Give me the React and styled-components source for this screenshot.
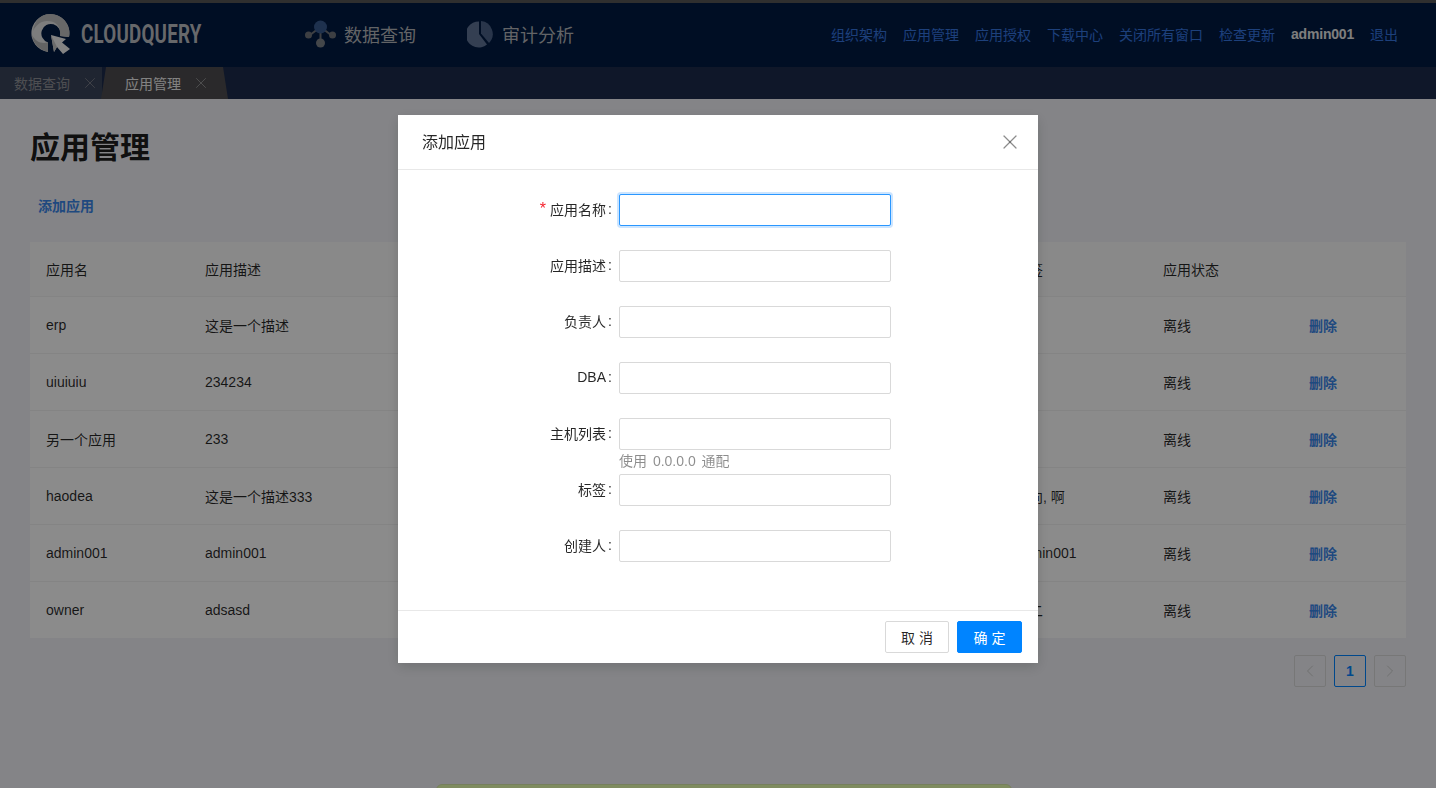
import React from 'react';
import styled, { createGlobalStyle } from 'styled-components';
import { X, ChevronLeft, ChevronRight } from 'lucide-react';

const FONT = `"Liberation Sans", "Noto Sans CJK SC", sans-serif`;

const navLinks = ['组织架构', '应用管理', '应用授权', '下载中心', '关闭所有窗口', '检查更新'];

const rows = [
  { name: 'erp', desc: '这是一个描述', tag: '' },
  { name: 'uiuiuiu', desc: '234234', tag: '' },
  { name: '另一个应用', desc: '233', tag: '' },
  { name: 'haodea', desc: '这是一个描述333', tag: '方向, 啊' },
  { name: 'admin001', desc: 'admin001', tag: 'admin001' },
  { name: 'owner', desc: 'adsasd', tag: '一二' },
];

const fields = [
  { label: '应用名称', required: true, focused: true },
  { label: '应用描述' },
  { label: '负责人' },
  { label: 'DBA' },
  { label: '主机列表', hint: '使用 0.0.0.0 通配' },
  { label: '标签' },
  { label: '创建人' },
];

function Logo() {
  return (
    <svg width="40" height="40" viewBox="0 0 40 40">
      <g transform="translate(0 1)">
        <path d="M18 37A19 19 0 1 1 39 22L30 21A9.500 9.500 0 1 0 18 27.500Z" fill="#e4e4e4" />
        <path d="M20 -1A19 19 0 0 1 39 22L30 21C31 11 26 6 17 6C11 6 6 10 3 16C4 6 11 -1 20 -1Z" fill="#bdbdbd" />
        <path d="M18 37C10 35 3 29 2 20C6 27 11 29 18 27.500Z" fill="#b5b5b5" />
        <path d="M21 20L36 24L32 27.500L40 34L33 39L27 32L24 37Z" fill="#efefef" />
        <path d="M21 20L27 32L24 37Z" fill="#c4c4c4" />
      </g>
    </svg>
  );
}

function QueryIcon() {
  return (
    <svg width="31" height="28" viewBox="0 0 31 28">
      <path d="M15.500 7L5 15M15.500 7L26 15M15.500 7L15.500 23" stroke="#6f737a" strokeWidth="2" fill="none" />
      <circle cx="15.500" cy="7" r="6.500" fill="#37598f" />
      <circle cx="3.500" cy="15" r="3.500" fill="#70747a" />
      <circle cx="27.500" cy="15" r="3.500" fill="#70747a" />
      <circle cx="15.500" cy="23" r="4.500" fill="#7d8188" />
    </svg>
  );
}

function AuditIcon() {
  return (
    <svg width="27" height="28" viewBox="0 0 27 28">
      <path d="M12 1.500V14L20 24.500A13 13 0 1 1 12 1.500Z" fill="#5f7396" />
      <path d="M14 1A13 13 0 0 1 22 23L14 13.500Z" fill="#4b6288" />
    </svg>
  );
}

export default function App() {
  return (
    <>
      <GlobalStyle />
      <Page>
        <TopStrip />
        <Header>
          <Brand>
            <Logo />
            <BrandName>CLOUDQUERY</BrandName>
          </Brand>
          <MainNav>
            <MainNavItem><QueryIcon />数据查询</MainNavItem>
            <MainNavItem><AuditIcon />审计分析</MainNavItem>
          </MainNav>
          <UserNav>
            {navLinks.map((link) => <NavLink key={link}>{link}</NavLink>)}
            <UserName>admin001</UserName>
            <NavLink>退出</NavLink>
          </UserNav>
        </Header>
        <TabBar>
          <Tab>数据查询<X size={18} strokeWidth={1.100} /></Tab>
          <Tab $active>应用管理<X size={18} strokeWidth={1.100} /></Tab>
        </TabBar>
        <Content>
          <Title>应用管理</Title>
          <AddLink>添加应用</AddLink>
          <Table>
            <colgroup>
              <col style={{ width: 159 }} />
              <col style={{ width: 810 }} />
              <col style={{ width: 148 }} />
              <col style={{ width: 146 }} />
              <col />
            </colgroup>
            <thead>
              <tr>
                <th>应用名</th>
                <th>应用描述</th>
                <th>标签</th>
                <th>应用状态</th>
                <th />
              </tr>
            </thead>
            <tbody>
              {rows.map((row) => (
                <tr key={row.name}>
                  <td>{row.name}</td>
                  <td>{row.desc}</td>
                  <td>{row.tag}</td>
                  <td>离线</td>
                  <td><DeleteLink>删除</DeleteLink></td>
                </tr>
              ))}
            </tbody>
          </Table>
          <Pagination>
            <PageButton $muted><ChevronLeft size={20} strokeWidth={1} /></PageButton>
            <PageButton $current>1</PageButton>
            <PageButton $muted><ChevronRight size={20} strokeWidth={1} /></PageButton>
          </Pagination>
        </Content>
        <Notice />
      </Page>
      <Mask>
        <Modal>
          <ModalHeader>
            添加应用
            <CloseButton><X size={24} strokeWidth={1.200} /></CloseButton>
          </ModalHeader>
          <ModalBody>
            {fields.map((field) => (
              <FormRow key={field.label}>
                <Label>
                  {field.required && <Star>*</Star>}
                  {field.label}
                  <Colon>:</Colon>
                </Label>
                <Control>
                  <Input $focused={field.focused} />
                  {field.hint && <Hint>{field.hint}</Hint>}
                </Control>
              </FormRow>
            ))}
          </ModalBody>
          <ModalFooter>
            <Button>取 消</Button>
            <Button $primary>确 定</Button>
          </ModalFooter>
        </Modal>
      </Mask>
    </>
  );
}

const GlobalStyle = createGlobalStyle`
  html, body {
    margin: 0;
    height: 100%;
    overflow: hidden;
  }
  body {
    font-family: ${FONT};
    font-size: 14px;
    color: rgba(0, 0, 0, 0.85);
    background: #f0f1f6;
  }
`;

const Page = styled.div`
  height: 788px;
  position: relative;
  overflow: hidden;
`;

const TopStrip = styled.div`
  height: 3px;
  background: #565656;
`;

const Header = styled.header`
  height: 64px;
  display: flex;
  align-items: center;
  background: #001a42;
  padding: 0 38px 2px 30px;
  box-sizing: border-box;
`;

const Brand = styled.div`
  width: 275px;
  display: flex;
  align-items: center;
  gap: 11px;
`;

const BrandName = styled.span`
  font-family: "Liberation Sans Narrow", "Roboto", sans-serif;
  font-size: 25px;
  font-weight: 700;
  color: #bcbdc2;
  letter-spacing: 0.3px;
  transform: scaleX(0.75);
  transform-origin: left center;
`;

const MainNav = styled.nav`
  display: flex;
  align-items: center;
  gap: 51px;
`;

const MainNavItem = styled.a`
  display: flex;
  align-items: center;
  gap: 8px;
  font-size: 18px;
  color: #b4b6ba;
`;

const UserNav = styled.nav`
  margin-left: auto;
  display: flex;
  align-items: center;
  gap: 16px;
  font-size: 14px;
`;

const NavLink = styled.a`
  color: #3675e0;
`;

const UserName = styled.span`
  color: #e6e6e6;
  font-weight: 700;
  letter-spacing: -0.2px;
`;

const TabBar = styled.div`
  height: 32px;
  display: flex;
  background: #1c2a4c;
`;

const Tab = styled.div`
  width: ${(p) => (p.$active ? '127px' : '102px')};
  margin-left: ${(p) => (p.$active ? '-1px' : '0')};
  padding-left: ${(p) => (p.$active ? '24px' : '14px')};
  box-sizing: border-box;
  display: flex;
  align-items: center;
  gap: 11px;
  font-size: 14px;
  color: ${(p) => (p.$active ? '#ededed' : '#8e9096')};
  background: ${(p) => (p.$active ? '#4d4c4f' : '#39445a')};
  clip-path: ${(p) => (p.$active ? 'polygon(5px 0, 122px 0, 100% 100%, 0 100%)' : 'none')};
  & > svg {
    color: ${(p) => (p.$active ? '#9a9a9c' : '#80828a')};
  }
`;

const Content = styled.main`
  padding: 33px 30px 0;
`;

const Title = styled.h1`
  margin: 0;
  font-size: 30px;
  line-height: 32px;
  font-weight: 700;
  color: rgba(0, 0, 0, 0.9);
`;

const AddLink = styled.a`
  display: block;
  margin: 31px 0 0 8px;
  line-height: 22px;
  font-weight: 700;
  color: #3a85e8;
`;

const Table = styled.table`
  width: 100%;
  margin-top: 25px;
  table-layout: fixed;
  border-collapse: collapse;
  background: #fefefe;

  th, td {
    padding: 0 16px;
    text-align: left;
    font-weight: 400;
    border-bottom: 1px solid #f0f0f0;
    white-space: nowrap;
  }
  th {
    height: 54px;
    background: #fafafa;
  }
  td {
    height: 56px;
  }
  tbody tr:last-child td {
    border-bottom: 0;
  }
`;

const DeleteLink = styled.a`
  font-weight: 700;
  color: #3a85e8;
`;

const Pagination = styled.div`
  display: flex;
  justify-content: flex-end;
  gap: 8px;
  margin-top: 17px;
`;

const PageButton = styled.div`
  width: 30px;
  height: 30px;
  display: flex;
  align-items: center;
  justify-content: center;
  border-radius: 2px;
  border: 1px solid ${(p) => (p.$current ? '#0084ff' : '#d9d9d9')};
  color: ${(p) => (p.$current ? '#0084ff' : '#c4c4c4')};
  font-weight: ${(p) => (p.$current ? 700 : 400)};
`;

const Notice = styled.div`
  position: absolute;
  left: 436px;
  top: 784px;
  width: 576px;
  height: 60px;
  background: #e8ffb0;
  border: 1px solid #d8e8a8;
  border-radius: 6px;
  box-sizing: border-box;
`;

const Mask = styled.div`
  position: fixed;
  inset: 0;
  background: rgba(0, 0, 0, 0.45);
`;

const Modal = styled.div`
  position: absolute;
  left: 398px;
  top: 115px;
  width: 640px;
  background: #fff;
  box-shadow: 0 4px 12px rgba(0, 0, 0, 0.15);
`;

const ModalHeader = styled.div`
  height: 55px;
  box-sizing: border-box;
  padding: 0 24px 2px;
  display: flex;
  align-items: center;
  justify-content: space-between;
  border-bottom: 1px solid #e8e8e8;
  font-size: 16px;
  color: rgba(0, 0, 0, 0.85);
`;

const CloseButton = styled.span`
  display: flex;
  margin-right: -8px;
  padding-top: 2px;
  color: rgba(0, 0, 0, 0.45);
`;

const ModalBody = styled.div`
  height: 440px;
  box-sizing: border-box;
  padding-top: 24px;
  display: flex;
  flex-direction: column;
  gap: 24px;
`;

const FormRow = styled.div`
  display: flex;
  height: 32px;
`;

const Label = styled.label`
  width: 221px;
  height: 32px;
  padding-bottom: 2px;
  box-sizing: border-box;
  flex: none;
  display: flex;
  align-items: center;
  justify-content: flex-end;
  color: rgba(0, 0, 0, 0.85);
`;

const Star = styled.span`
  color: #f5222d;
  margin-right: 4px;
  font-size: 16px;
`;

const Colon = styled.span`
  margin: 0 7px 0 2px;
  width: 4px;
`;

const Control = styled.div`
  width: 272px;
`;

const Input = styled.input`
  display: block;
  width: 100%;
  height: 32px;
  box-sizing: border-box;
  padding: 4px 11px;
  outline: 0;
  background: #fff;
  border-radius: 2px;
  border: 1px solid ${(p) => (p.$focused ? '#2a97ff' : '#d9d9d9')};
  box-shadow: ${(p) => (p.$focused ? '0 0 0 2px rgba(0, 127, 255, 0.2)' : 'none')};
`;

const Hint = styled.div`
  line-height: 22px;
  word-spacing: 2px;
  color: rgba(0, 0, 0, 0.45);
`;

const ModalFooter = styled.div`
  height: 53px;
  box-sizing: border-box;
  padding: 0 16px;
  border-top: 1px solid #e8e8e8;
  display: flex;
  align-items: center;
  justify-content: flex-end;
  gap: 8px;
`;

const Button = styled.button`
  height: 32px;
  width: ${(p) => (p.$primary ? '65px' : '64px')};
  padding: 0;
  font-family: ${FONT};
  font-size: 14px;
  border-radius: 2px;
  border: 1px solid ${(p) => (p.$primary ? '#0084ff' : '#d9d9d9')};
  background: ${(p) => (p.$primary ? '#0084ff' : '#fff')};
  color: ${(p) => (p.$primary ? '#fff' : 'rgba(0, 0, 0, 0.85)')};
`;
